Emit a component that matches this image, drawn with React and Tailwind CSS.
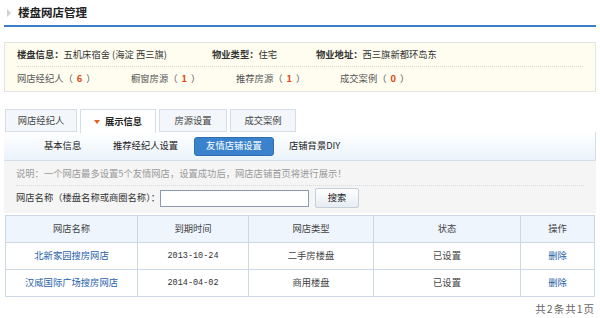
import React from 'react';

const rows = [
  { name: '北新家园搜房网店', date: '2013-10-24', type: '二手房楼盘', status: '已设置' },
  { name: '汉威国际广场搜房网店', date: '2014-04-02', type: '商用楼盘', status: '已设置' },
];

const stats = [
  { label: '网店经纪人', n: 6, w: 'w-[114px]' },
  { label: '橱窗房源', n: 1, w: 'w-[105px]' },
  { label: '推荐房源', n: 1, w: 'w-[104px]' },
  { label: '成交案例', n: 0, w: '' },
];

const tabs = ['网店经纪人', '展示信息', '房源设置', '成交案例'];

export default function App() {
  return (
    <div className="w-[600px] h-[318px] bg-white text-[9.3px] leading-none text-[#333] px-[4px] font-['Noto_Sans_CJK_SC',sans-serif] overflow-hidden">
      {/* title */}
      <div className="flex items-center h-[27px] border-b-2 border-[#3d7ec6] pl-[3px]">
        <span className="w-0 h-0 border-y-[4px] border-y-transparent border-l-[4px] border-l-[#cfcfcf] mr-[7px]"></span>
        <h1 className="text-[11.5px] font-bold text-[#222] leading-none">楼盘网店管理</h1>
      </div>

      {/* info box */}
      <div className="mt-[15px] h-[50px] border border-[#e3e3e3] bg-[#fefdf0] px-[12px]">
        <div className="flex items-center h-[24px] border-b border-dotted border-[#d8d8d8] pt-[1px]">
          <span className="w-[195px]"><b className="text-[#333]">楼盘信息：</b>五机床宿舍 (海淀 西三旗)</span>
          <span className="w-[104px]"><b>物业类型：</b>住宅</span>
          <span><b>物业地址：</b>西三旗新都环岛东</span>
        </div>
        <div className="flex items-center h-[24px] text-[#555]">
          {stats.map((s) => (
            <span key={s.label} className={s.w}>
              {s.label}（<b className="text-[#e0450f] px-[4px]">{s.n}</b>）
            </span>
          ))}
        </div>
      </div>

      {/* tabs */}
      <div className="mt-[17px] flex gap-[3px] pl-[1px] h-[23px]">
        {tabs.map((t, i) =>
          i === 1 ? (
            <div key={t} className="w-[76px] h-[24px] border border-b-0 border-[#d5dee8] bg-white flex items-center justify-center gap-[5px] font-bold text-[#222] relative z-10">
              <span className="w-0 h-0 border-x-[3.5px] border-x-transparent border-t-[4px] border-t-[#e2631d]"></span>
              {t}
            </div>
          ) : (
            <div key={t} className={`${i === 0 ? 'w-[72px]' : i === 2 ? 'w-[68px]' : 'w-[66px]'} h-[23px] border border-[#d5dee8] bg-[#f3f6fa] flex items-center justify-center text-[#444]`}>
              {t}
            </div>
          )
        )}
      </div>

      {/* sub nav */}
      <div className="h-[29px] border-b border-r border-[#d5dee8] bg-gradient-to-b from-white to-[#eaf3fb] flex items-center">
        <span className="ml-[40px] w-[69px] text-[#222]">基本信息</span>
        <span className="w-[81px] text-[#222]">推荐经纪人设置</span>
        <span className="w-[80px] h-[19px] rounded-[3px] bg-[#3a83cc] text-white flex items-center justify-center border border-[#2f6fb0]">友情店铺设置</span>
        <span className="ml-[15px] text-[#222]">店铺背景DIY</span>
      </div>

      {/* search area */}
      <div className="bg-[#f5f5f5] px-[12px] pb-[3px]">
        <div className="h-[25px] flex items-center border-b border-dotted border-[#d8d8d8] text-[#999] pt-[1px]">
          说明：一个网店最多设置5个友情网店，设置成功后，网店店铺首页将进行展示！
        </div>
        <div className="h-[24px] flex items-center">
          <span className="text-[#333]">网店名称（楼盘名称或商圈名称）：</span>
          <input className="w-[149px] h-[17px] bg-white border border-[#8a9bb0]" />
          <button className="ml-[6px] w-[44px] h-[20px] rounded-[2px] border border-[#c5cfda] bg-gradient-to-b from-white to-[#e6ecf2] text-[#222]">搜索</button>
        </div>
      </div>

      {/* table */}
      <table className="mt-[2px] ml-[1px] w-[590px] border-collapse text-center">
        <thead>
          <tr className="h-[27px] bg-[#eef5fc] text-[#444]">
            <th className="w-[132px] border border-[#cbd8e6] font-normal">网店名称</th>
            <th className="w-[111px] border border-[#cbd8e6] font-normal">到期时间</th>
            <th className="w-[125px] border border-[#cbd8e6] font-normal">网店类型</th>
            <th className="w-[147px] border border-[#cbd8e6] font-normal">状态</th>
            <th className="border border-[#cbd8e6] font-normal">操作</th>
          </tr>
        </thead>
        <tbody>
          {rows.map((r) => (
            <tr key={r.name} className="h-[27px] bg-white">
              <td className="border border-[#cbd8e6] text-[#1f5fa8]">{r.name}</td>
              <td className="border border-[#cbd8e6] text-[#333] font-['Liberation_Mono',monospace] text-[8.5px]">{r.date}</td>
              <td className="border border-[#cbd8e6] text-[#444]">{r.type}</td>
              <td className="border border-[#cbd8e6] text-[#444]">{r.status}</td>
              <td className="border border-[#cbd8e6] text-[#1f5fa8]">删除</td>
            </tr>
          ))}
        </tbody>
      </table>

      {/* pager */}
      <div className="mt-[7px] pr-[1px] text-right text-[#666] text-[10.5px] tracking-[1px]">共2条共1页</div>
    </div>
  );
}
